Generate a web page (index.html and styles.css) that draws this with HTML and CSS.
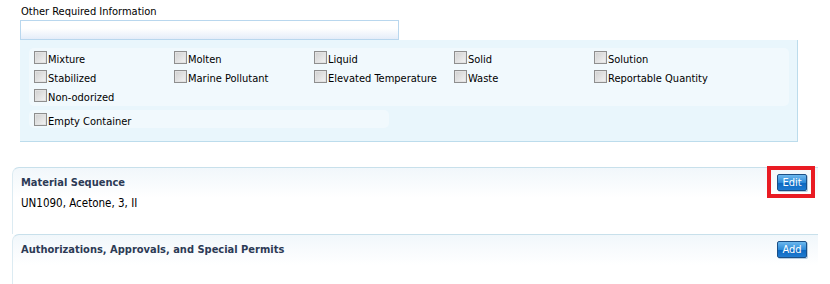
FILE: index.html
```html
<!DOCTYPE html>
<html lang="en">
<head>
    <meta charset="UTF-8">
    <title>Other Required Information</title>
    <link rel="stylesheet" href="styles.css">
</head>
<body>
    <div class="field">
        <label class="field-label">Other Required Information</label>
        <input type="text" class="field-input">
    </div>
    <div class="options-panel">
        <div class="option-group">
            <label class="option"><input type="checkbox">Mixture</label>
            <label class="option"><input type="checkbox">Molten</label>
            <label class="option"><input type="checkbox">Liquid</label>
            <label class="option"><input type="checkbox">Solid</label>
            <label class="option"><input type="checkbox">Solution</label>
            <label class="option"><input type="checkbox">Stabilized</label>
            <label class="option"><input type="checkbox">Marine Pollutant</label>
            <label class="option"><input type="checkbox">Elevated Temperature</label>
            <label class="option"><input type="checkbox">Waste</label>
            <label class="option"><input type="checkbox">Reportable Quantity</label>
            <label class="option"><input type="checkbox">Non-odorized</label>
        </div>
        <div class="option-group single">
            <label class="option"><input type="checkbox">Empty Container</label>
        </div>
    </div>

    <section class="section">
        <div class="section-head">
            <h2>Material Sequence</h2>
            <span class="highlight"><button class="btn">Edit</button></span>
        </div>
        <p class="section-body">UN1090, Acetone, 3, II</p>
    </section>

    <section class="section">
        <div class="section-head">
            <h2>Authorizations, Approvals, and Special Permits</h2>
            <button class="btn">Add</button>
        </div>
    </section>
</body>
</html>
```

FILE: styles.css
```css
body {
    margin: 0;
    font-family: 'DejaVu Sans Condensed', 'DejaVu Sans', sans-serif;
    font-size: 11px;
    color: #000;
    background: #fff;
}
.field {
    padding: 5px 0 0 20px;
}
.field-label {
    display: block;
    height: 15px;
    line-height: 14px;
    padding-left: 1px;
    font-size: 11px;
}
.field-input {
    display: block;
    box-sizing: border-box;
    width: 379px;
    height: 20px;
    margin: 0;
    border: 1px solid #b9d7ee;
    background: linear-gradient(#ffffff, #ffffff 40%, #e4edf9);
}
.options-panel {
    box-sizing: border-box;
    width: 778px;
    margin-left: 20px;
    padding: 8px 8px 13px 9px;
    background: #e9f6fc;
    border-right: 1px solid #bcdcec;
    border-bottom: 1px solid #bcdcec;
}
.option-group {
    display: grid;
    grid-template-columns: repeat(5, 140px);
    grid-auto-rows: 19px;
    padding: 3px 5px 0;
    height: 55px;
    background: #f1f9fd;
    border-radius: 5px;
}
.option-group.single {
    width: 350px;
    height: 15px;
    margin-top: 4px;
    grid-template-columns: 1fr;
}
.option {
    display: block;
    height: 17px;
    line-height: 17px;
    font-size: 11px;
    white-space: nowrap;
}
.option input {
    appearance: none;
    box-sizing: border-box;
    vertical-align: top;
    width: 13px;
    height: 13px;
    margin: 0 1px 0 0;
    border: 1px solid #8e8e8e;
    background: linear-gradient(135deg, #cfcfcf, #f4f4f4);
    box-shadow: inset 0 0 0 1px #e2e2e2;
}
.section {
    margin: 25px 12px 0 12px;
    border-top: 1px solid #c8e0eb;
    border-left: 1px solid #dcebf2;
    border-top-left-radius: 7px;
    background: linear-gradient(#f1f7fb, #ffffff 30px);
    height: 66px;
}
.section + .section {
    margin-top: 0;
    height: 50px;
}
.section-head {
    display: flex;
    justify-content: space-between;
    align-items: center;
    height: 23px;
    padding: 0 11px 0 8px;
    margin-top: 3px;
}
.section-head h2 {
    margin: 0;
    font-size: 11px;
    font-weight: bold;
    color: #2c3a55;
}
.section-body {
    margin: 2px 0 0 8px;
    font-size: 11.5px;
}
.highlight {
    position: relative;
    display: inline-flex;
}
.highlight::after {
    content: "";
    position: absolute;
    top: -8px;
    left: -10px;
    right: -8px;
    bottom: -7px;
    border: 4px solid #e91b23;
}
.btn {
    width: 30px;
    height: 17px;
    padding: 0;
    font-family: 'DejaVu Sans Condensed', 'DejaVu Sans', sans-serif;
    font-size: 11px;
    line-height: 15px;
    color: #fff;
    border: 1px solid #1b4f86;
    border-radius: 2px;
    background: linear-gradient(#6db8ee, #2d8ad8 50%, #0b66bf 51%, #1f7bd0);
    box-shadow: 1px 1px 0 #b7cde0;
}
```
